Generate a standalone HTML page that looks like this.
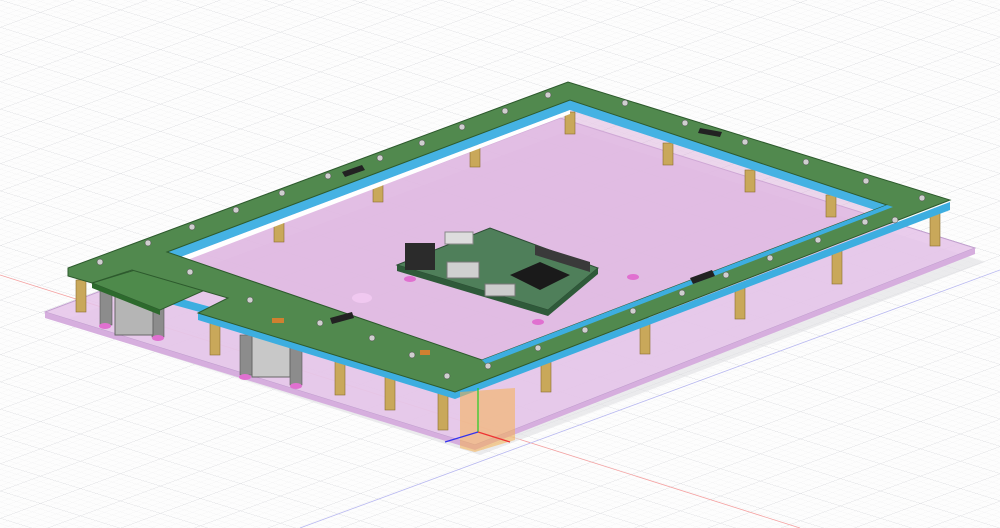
<!DOCTYPE html>
<html><head><meta charset="utf-8"><style>html,body{margin:0;padding:0;background:#fff;overflow:hidden}svg{display:block}</style></head>
<body>
<svg width="1000" height="528" viewBox="0 0 1000 528" xmlns="http://www.w3.org/2000/svg">
<defs>
<pattern id="g" width="8" height="8" patternUnits="userSpaceOnUse" patternTransform="matrix(1,-0.372,1,0.31,0,0)">
<path d="M0 0H8M0 0V8" stroke="#eeeef0" stroke-width="0.8" fill="none"/>
</pattern>
<pattern id="g2" width="40" height="40" patternUnits="userSpaceOnUse" patternTransform="matrix(1,-0.372,1,0.31,0,0)">
<path d="M0 0H40M0 0V40" stroke="#d6d7db" stroke-width="0.9" fill="none"/>
</pattern>
</defs>
<rect width="1000" height="528" fill="#fdfdfd"/>
<rect width="1000" height="528" fill="url(#g)"/>
<rect width="1000" height="528" fill="url(#g2)"/>
<line x1="0" y1="275" x2="800" y2="528" stroke="#f4a0a0" stroke-width="0.8"/>
<line x1="300" y1="528" x2="1000" y2="270" stroke="#b8b8f0" stroke-width="0.8"/>
<!-- shadow -->
<polygon points="60,322 570,130 985,262 480,455" fill="#e0e0e2" opacity="0.6"/>
<!-- base plate -->
<polygon points="45,312 560,118 975,248 475,445" fill="#e6c4ea" opacity="0.85" stroke="#b890c8" stroke-width="1"/>
<polygon points="45,312 475,445 475,450 45,318" fill="#d6aede"/>
<polygon points="475,445 975,248 975,254 475,450" fill="#d6aede"/>
<!-- inside area -->
<polygon points="172,260 570,108 885,210 480,368" fill="#dcb0dc" opacity="0.5"/>
<!-- standoffs -->
<g fill="#c9a85a" stroke="#8a6e30" stroke-width="0.6">
<rect x="76" y="280" width="10" height="32"/><rect x="210" y="315" width="10" height="40"/>
<rect x="335" y="355" width="10" height="40"/><rect x="385" y="370" width="10" height="40"/>
<rect x="438" y="390" width="10" height="40"/><rect x="541" y="356" width="10" height="36"/>
<rect x="640" y="318" width="10" height="36"/><rect x="735" y="285" width="10" height="34"/>
<rect x="832" y="250" width="10" height="34"/><rect x="930" y="212" width="10" height="34"/>
<rect x="373" y="180" width="10" height="22"/><rect x="274" y="220" width="10" height="22"/>
<rect x="470" y="145" width="10" height="22"/><rect x="565" y="112" width="10" height="22"/>
<rect x="663" y="143" width="10" height="22"/><rect x="745" y="170" width="10" height="22"/>
<rect x="826" y="195" width="10" height="22"/>
</g>
<!-- grey standoffs / connectors -->
<g fill="#8c8c8c" stroke="#555" stroke-width="0.6">
<rect x="100" y="285" width="12" height="40"/><rect x="152" y="292" width="12" height="45"/>
<rect x="240" y="335" width="12" height="40"/><rect x="290" y="345" width="12" height="40"/>
</g>
<rect x="115" y="290" width="38" height="45" fill="#b5b5b5" stroke="#666"/>
<rect x="252" y="335" width="38" height="42" fill="#c8c8c8" stroke="#666"/>
<ellipse cx="105" cy="326" rx="6" ry="3" fill="#e070d0"/><ellipse cx="158" cy="338" rx="6" ry="3" fill="#e070d0"/>
<ellipse cx="245" cy="377" rx="6" ry="3" fill="#e070d0"/><ellipse cx="296" cy="386" rx="6" ry="3" fill="#e070d0"/>
<!-- frame side edges -->
<polygon points="68,268 68,276 470,386 470,378" fill="#3daee0"/>
<polygon points="455,392 950,202 950,210 455,399" fill="#3daee0"/>
<polygon points="198,313 198,320 455,399 455,392" fill="#3daee0"/>
<!-- inner blue wall -->
<polygon points="167,252 570,100 570,110 178,258" fill="#45b2e3"/>
<polygon points="570,100 887,205 875,210 570,110" fill="#45b2e3"/>
<polygon points="178,258 182,262 570,114 570,110" fill="#fff"/>
<!-- small left board -->
<polygon points="92,283 135,270 205,290 160,310" fill="#4e8a4b" stroke="#2e5a2e"/>
<polygon points="92,283 160,310 160,315 92,288" fill="#2d6a2d"/>
<!-- green frame -->
<path fill-rule="evenodd" fill="#51894e" stroke="#2d5a2d" stroke-width="1" d="M68,268 L568,82 L950,200 L455,392 L198,313 L228,298 L132,270 L92,283 L68,276 Z M167,252 L482,360 L887,205 L570,100 Z"/>
<polygon points="887,205 482,360 486,364 893,207" fill="#3daee0"/>
<!-- center board -->
<polygon points="397,265 490,228 598,268 548,310" fill="#4f7f5a" stroke="#2d4d35"/>
<polygon points="397,265 548,310 548,316 397,271" fill="#2f5a3a"/>
<polygon points="548,310 598,268 598,274 548,316" fill="#2f5a3a"/>
<rect x="405" y="243" width="30" height="27" fill="#2b2b2b"/>
<polygon points="510,275 540,262 570,275 540,290" fill="#1a1a1a"/>
<polygon points="535,245 590,262 590,272 535,255" fill="#3a3a3a"/>
<rect x="447" y="262" width="32" height="16" fill="#d0d0d0" stroke="#777"/>
<rect x="485" y="284" width="30" height="12" fill="#ccc" stroke="#777"/>
<rect x="445" y="232" width="28" height="12" fill="#ddd" stroke="#888"/>
<ellipse cx="410" cy="279" rx="6" ry="3" fill="#e070d0"/>
<ellipse cx="538" cy="322" rx="6" ry="3" fill="#e070d0"/>
<ellipse cx="633" cy="277" rx="6" ry="3" fill="#e070d0"/>
<ellipse cx="362" cy="298" rx="10" ry="5" fill="#f0c8f0"/>
<!-- chips on frame -->
<g fill="#222"><polygon points="342,172 362,165 365,170 345,177"/><polygon points="700,128 722,132 720,137 698,133"/><polygon points="690,278 712,270 715,276 693,284"/><polygon points="330,318 352,312 354,318 332,324"/></g>
<!-- LEDs -->
<g fill="#cfcfcf" stroke="#444" stroke-width="0.5">
<circle cx="100" cy="262" r="3"/><circle cx="148" cy="243" r="3"/><circle cx="192" cy="227" r="3"/><circle cx="236" cy="210" r="3"/><circle cx="282" cy="193" r="3"/><circle cx="328" cy="176" r="3"/><circle cx="380" cy="158" r="3"/><circle cx="422" cy="143" r="3"/><circle cx="462" cy="127" r="3"/><circle cx="505" cy="111" r="3"/><circle cx="548" cy="95" r="3"/>
<circle cx="625" cy="103" r="3"/><circle cx="685" cy="123" r="3"/><circle cx="745" cy="142" r="3"/><circle cx="806" cy="162" r="3"/><circle cx="866" cy="181" r="3"/><circle cx="922" cy="198" r="3"/>
<circle cx="895" cy="220" r="3"/><circle cx="865" cy="222" r="3"/><circle cx="818" cy="240" r="3"/><circle cx="770" cy="258" r="3"/><circle cx="726" cy="275" r="3"/><circle cx="682" cy="293" r="3"/><circle cx="633" cy="311" r="3"/><circle cx="585" cy="330" r="3"/><circle cx="538" cy="348" r="3"/><circle cx="488" cy="366" r="3"/><circle cx="447" cy="376" r="3"/><circle cx="412" cy="355" r="3"/><circle cx="372" cy="338" r="3"/><circle cx="320" cy="323" r="3"/><circle cx="250" cy="300" r="3"/><circle cx="190" cy="272" r="3"/>
</g>
<rect x="272" y="318" width="12" height="5" fill="#d08030"/><rect x="420" y="350" width="10" height="5" fill="#d08030"/>
<!-- origin box -->
<polygon points="460,392 515,388 515,440 475,452 460,448" fill="#f5b050" opacity="0.55"/>
<line x1="478" y1="388" x2="478" y2="432" stroke="#2c2" stroke-width="1.2"/>
<line x1="478" y1="432" x2="510" y2="442" stroke="#e33" stroke-width="1.2"/>
<line x1="478" y1="432" x2="445" y2="442" stroke="#33e" stroke-width="1.2"/>
</svg>
</body></html>
